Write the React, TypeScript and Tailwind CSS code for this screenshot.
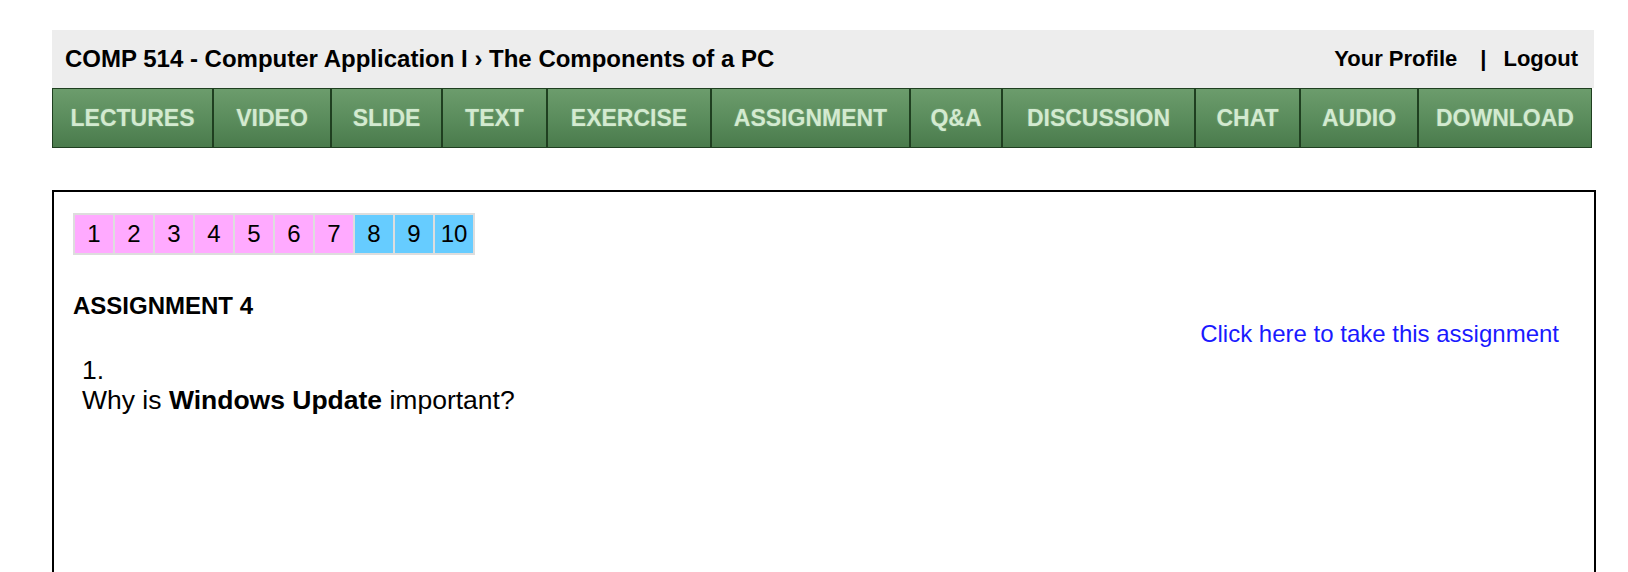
import React from "react";

const navItems: { label: string; w: string }[] = [
  { label: "LECTURES", w: "w-[161px]" },
  { label: "VIDEO", w: "w-[118px]" },
  { label: "SLIDE", w: "w-[111px]" },
  { label: "TEXT", w: "w-[105px]" },
  { label: "EXERCISE", w: "w-[164px]" },
  { label: "ASSIGNMENT", w: "w-[199px]" },
  { label: "Q&A", w: "w-[92px]" },
  { label: "DISCUSSION", w: "w-[193px]" },
  { label: "CHAT", w: "w-[105px]" },
  { label: "AUDIO", w: "w-[118px]" },
  { label: "DOWNLOAD", w: "w-[174px]" },
];

export default function App() {
  return (
    <div className="w-[1628px] h-[572px] overflow-hidden bg-white font-['Liberation_Sans',Arial,sans-serif] text-black">
      <div className="ml-[52px] w-[1544px] pt-[30px]">
        <div className="h-[58px] w-[1542px] bg-[#ededed] flex items-center justify-between pl-[13px] pr-[16px]">
          <div className="text-[24px] font-bold leading-none">
            COMP 514 - Computer Application I › The Components of a PC
          </div>
          <div className="flex items-center text-[22px] font-bold leading-none">
            <span>Your Profile</span>
            <span className="ml-[23px] mr-[17px]">|</span>
            <span>Logout</span>
          </div>
        </div>
        <div className="flex h-[60px] w-[1540px]">
          {navItems.map((n) => (
            <div
              key={n.label}
              className={`${n.w} h-full flex items-center justify-center border border-[#1f3f20] bg-gradient-to-b from-[#6c9c6c] via-[#5b8d5d] to-[#4a7b4c] text-[23px] font-bold text-[#d3ead0] [text-shadow:0_0_2px_rgba(220,255,220,0.3)]`}
            >
              {n.label}
            </div>
          ))}
        </div>
        <div className="mt-[42px] h-[420px] border-2 border-black pl-[19px] pr-[19px] pt-[21px]">
          <div className="inline-flex bg-[#dddddd] p-[2px] gap-[2px]">
            {[1, 2, 3, 4, 5, 6, 7, 8, 9, 10].map((i) => (
              <div
                key={i}
                className={`h-[38px] w-[38px] flex items-center justify-center text-[24px] ${
                  i <= 7 ? "bg-[#ffaaff]" : "bg-[#66ccff]"
                }`}
              >
                {i}
              </div>
            ))}
          </div>
          <div className="mt-[37px] text-[24px] font-bold leading-[28px]">ASSIGNMENT 4</div>
          <div className="text-right pr-[16px] leading-[28px]">
            <a className="text-[24px] text-[#1a1aff]">Click here to take this assignment</a>
          </div>
          <div className="mt-[4px] pl-[9px] text-[26.5px] leading-[30px]">
            <div>1.</div>
            <div>
              Why is <b>Windows Update</b> important?
            </div>
          </div>
        </div>
      </div>
    </div>
  );
}
